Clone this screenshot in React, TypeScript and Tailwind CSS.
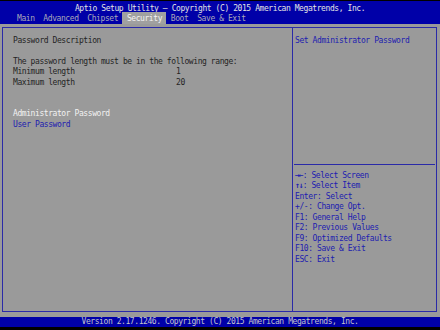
const font = { fontFamily: '"DejaVu Sans Mono", "Liberation Mono", monospace' };

const tabs = ['Main', 'Advanced', 'Chipset', 'Security', 'Boot', 'Save & Exit'];

const help: [string, string][] = [
  ['→←', ': Select Screen'],
  ['↑↓', ': Select Item'],
  ['', 'Enter: Select'],
  ['', '+/-: Change Opt.'],
  ['', 'F1: General Help'],
  ['', 'F2: Previous Values'],
  ['', 'F9: Optimized Defaults'],
  ['', 'F10: Save & Exit'],
  ['', 'ESC: Exit'],
];

export default function App() {
  return (
    <div
      style={font}
      className="w-[440px] h-[330px] bg-black flex flex-col pt-[1px] pb-[3px] text-[8px] leading-[10.45px] tracking-[-0.42px] whitespace-pre overflow-hidden"
    >
      {/* header */}
      <div className="bg-[#0000a8] h-[23px] flex flex-col">
        <div className="h-[11px] pt-[3px] text-center text-[#e4e4e4]">
          Aptio Setup Utility – Copyright (C) 2015 American Megatrends, Inc.
        </div>
        <div className="flex-1 flex items-end pl-[12.6px]">
          {tabs.map(t => (
            <div
              key={t}
              className={
                t === 'Security'
                  ? 'h-[12px] px-[4.4px] bg-[#a0a0a0] text-[#f4f4f4] pt-[1.5px]'
                  : 'h-[12px] px-[4.4px] text-[#a8a8b8] pt-[1.5px]'
              }
            >
              {t}
            </div>
          ))}
        </div>
      </div>

      {/* body */}
      <div className="flex-1 bg-[#9a9a9a] pt-[3px] pb-[5px] pl-[2px] pr-[3px] flex">
        <div className="flex-1 flex border border-[#2a2aa8]">
          <div className="w-[290px] border-r border-[#2a2aa8] pl-[10px] pt-[8px] text-[#242424]">
            <div>Password Description</div>
            <div>&nbsp;</div>
            <div>The password length must be in the following range:</div>
            <div className="flex">
              <span className="w-[163px]">Minimum length</span>
              <span>1</span>
            </div>
            <div className="flex">
              <span className="w-[163px]">Maximum length</span>
              <span>20</span>
            </div>
            <div>&nbsp;</div>
            <div>&nbsp;</div>
            <div className="text-[#f2f2f2]">Administrator Password</div>
            <div className="text-[#2020b0]">User Password</div>
          </div>
          <div className="flex-1 flex flex-col text-[#2020b0]">
            <div className="h-[137px] pl-[1px] pt-[8px] border-b border-[#2a2aa8] mx-[1px]">
              Set Administrator Password
            </div>
            <div className="pl-[2px] pt-[6px]">
              {help.map(([a, b]) => (
                <div key={b}>
                  {a && <span className="font-bold tracking-[-1px]">{a}</span>}
                  {b}
                </div>
              ))}
            </div>
          </div>
        </div>
      </div>

      {/* footer */}
      <div className="bg-[#0000a8] h-[10px] text-center text-[#c4c4cc] leading-[10px]">
        Version 2.17.1246. Copyright (C) 2015 American Megatrends, Inc.
      </div>
    </div>
  );
}
